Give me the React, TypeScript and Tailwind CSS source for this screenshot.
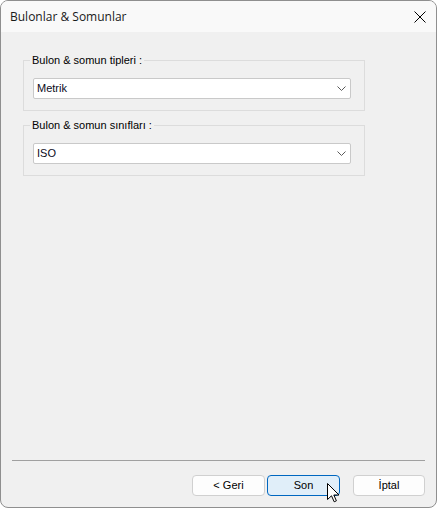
import { ReactNode } from "react";

const ui = { fontFamily: '"Liberation Sans", Arial, sans-serif' };

function Chevron() {
  return (
    <svg width="9" height="5" viewBox="0 0 9 5" className="text-[#5a5a5a]">
      <polyline points="0.5,0.5 4.5,4.5 8.5,0.5" fill="none" stroke="currentColor" strokeWidth="1" />
    </svg>
  );
}

function Combo({ value }: { value: string }) {
  return (
    <div className="w-[318px] h-[21px] bg-white border border-[#c9c9c9] rounded-[2px] flex items-center justify-between pl-[3px] pr-[4px] text-[11px] text-[#0a0a1a]">
      <span>{value}</span>
      <Chevron />
    </div>
  );
}

function Group({ label, children }: { label: string; children: ReactNode }) {
  return (
    <fieldset className="w-[342px] border border-[#dcdcdc] pl-[9px] pt-[11px] pb-[11px]">
      <legend className="-ml-[3px] px-[2px] text-[11px] leading-[13px] text-black">{label}</legend>
      {children}
    </fieldset>
  );
}

function Cursor() {
  return (
    <svg
      width="13"
      height="20"
      viewBox="0 0 13 20"
      className="absolute left-[326px] top-[482px]"
    >
      <path
        d="M0.5 0.5 L0.5 16.5 L4.5 12.8 L7.2 18.8 L9.4 17.8 L6.8 12 L12 12 Z"
        fill="#fff"
        stroke="#000"
        strokeWidth="1"
        strokeLinejoin="miter"
      />
    </svg>
  );
}

export default function App() {
  return (
    <div className="relative w-[437px] h-[508px] flex flex-col bg-[#f0f0f0] border border-[#8f8f8f] rounded-[8px] overflow-hidden" style={ui}>
      <div className="h-[31px] bg-[#f9f9f9] flex items-center justify-between pl-[9px] pr-[10px] shrink-0">
        <span className="text-[12px] text-[#1a1a1a]" style={{ fontFamily: '"Open Sans", sans-serif' }}>
          Bulonlar &amp; Somunlar
        </span>
        <svg width="12" height="12" viewBox="0 0 12 12">
          <path d="M0.5 0.5 L11.5 11.5 M11.5 0.5 L0.5 11.5" stroke="#000" strokeWidth="1" />
        </svg>
      </div>

      <div className="flex-1 pl-[22px] pt-[22px] flex flex-col gap-[8px]">
        <Group label="Bulon & somun tipleri :">
          <Combo value="Metrik" />
        </Group>
        <Group label="Bulon & somun sınıfları :">
          <Combo value="ISO" />
        </Group>
      </div>

      <div className="mx-[11px] border-t border-[#a0a0a0]" />
      <div className="flex justify-end items-center pt-[14px] pb-[11px] pr-[11px] text-[11px] text-black">
        <button className="w-[73px] h-[21px] bg-[#fdfdfd] border border-[#d0d0d0] rounded-[4px]">&lt; Geri</button>
        <button className="ml-[2px] w-[73px] h-[21px] bg-[#e0eef9] border border-[#0067c0] rounded-[4px]">Son</button>
        <button className="ml-[13px] w-[72px] h-[21px] bg-[#fdfdfd] border border-[#d0d0d0] rounded-[4px]">İptal</button>
      </div>
      <Cursor />
    </div>
  );
}
